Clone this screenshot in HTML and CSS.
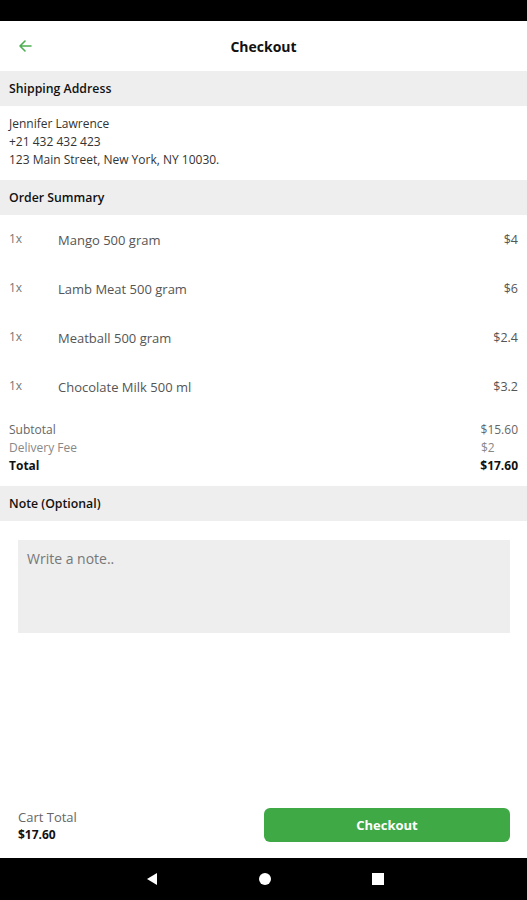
FILE: index.html
```html
<!DOCTYPE html>
<html>
<head>
<meta charset="utf-8">
<link rel="stylesheet" href="styles.css">
</head>
<body>
<div class="screen">
  <div class="status-bar"></div>
  <header class="app-bar">
    <svg class="back" width="16" height="16" viewBox="0 0 16 16"><path d="M14 8H3M8 3L3 8l5 5" fill="none" stroke="#4caf50" stroke-width="1.6" stroke-linecap="round" stroke-linejoin="round"/></svg>
    <h1 class="title">Checkout</h1>
  </header>
  <main class="content">
    <div class="section-head">Shipping Address</div>
    <div class="address">
      <div>Jennifer Lawrence</div>
      <div>+21 432 432 423</div>
      <div>123 Main Street, New York, NY 10030.</div>
    </div>
    <div class="section-head">Order Summary</div>
    <div class="items">
      <div class="item"><span class="qty">1x</span><span class="name">Mango 500 gram</span><span class="price">$4</span></div>
      <div class="item"><span class="qty">1x</span><span class="name">Lamb Meat 500 gram</span><span class="price">$6</span></div>
      <div class="item"><span class="qty">1x</span><span class="name">Meatball 500 gram</span><span class="price">$2.4</span></div>
      <div class="item"><span class="qty">1x</span><span class="name">Chocolate Milk 500 ml</span><span class="price">$3.2</span></div>
    </div>
    <div class="totals">
      <div class="trow"><span>Subtotal</span><span>$15.60</span></div>
      <div class="trow light"><span>Delivery Fee</span><span class="fee">$2</span></div>
      <div class="trow bold"><span>Total</span><span>$17.60</span></div>
    </div>
    <div class="section-head">Note (Optional)</div>
    <div class="note-wrap">
      <div class="note">Write a note..</div>
    </div>
  </main>
  <footer class="bottom">
    <div class="cart">
      <div class="cart-label">Cart Total</div>
      <div class="cart-value">$17.60</div>
    </div>
    <button class="checkout">Checkout</button>
  </footer>
  <nav class="nav-bar">
    <svg width="14" height="14" viewBox="0 0 14 14"><path d="M12 1v12L2 7z" fill="#fff"/></svg>
    <svg width="14" height="14" viewBox="0 0 14 14"><circle cx="7" cy="7" r="6" fill="#fff"/></svg>
    <svg width="14" height="14" viewBox="0 0 14 14"><rect x="1" y="1" width="12" height="12" fill="#fff"/></svg>
  </nav>
</div>
</body>
</html>
```
FILE: styles.css
```css
* { box-sizing: border-box; }
html, body { margin: 0; padding: 0; }
body {
  font-family: "Open Sans", "Noto Sans", sans-serif;
  color: #333;
  background: #fff;
}
.screen {
  width: 527px;
  height: 900px;
  display: flex;
  flex-direction: column;
}
.status-bar { height: 21px; background: #000; flex: none; }
.app-bar {
  height: 50px;
  flex: none;
  display: flex;
  align-items: center;
  justify-content: center;
  position: relative;
}
.back { position: absolute; left: 17px; top: 17px; }
.title {
  margin: 0;
  font-size: 14px;
  font-weight: 700;
  color: #111;
}
.content { flex: 1; }
.section-head {
  height: 35px;
  background: #eeeeee;
  display: flex;
  align-items: center;
  padding-left: 9px;
  font-size: 12.3px;
  font-weight: 600;
  color: #111;
}
.address {
  padding: 9px 9px 11px;
  font-size: 12px;
  line-height: 18px;
  color: #333;
}
.item {
  height: 49px;
  display: flex;
  align-items: center;
  padding: 0 9px;
  font-size: 13px;
  color: #555;
}
.qty { width: 49px; color: #777; margin-top: -3px; font-size: 12px; }
.name { flex: 1; }
.price { color: #555; font-size: 12.5px; }
.totals {
  padding: 10px 9px 11px;
  font-size: 12px;
  line-height: 18px;
}
.trow { display: flex; justify-content: space-between; color: #666; }
.trow.light { color: #888; }
.trow .fee { width: 37px; }
.trow.bold { color: #111; font-weight: 700; }
.note-wrap { padding: 19px 17px 0 18px; }
.note {
  height: 93px;
  background: #eeeeee;
  padding: 9px;
  font-size: 14px;
  color: #777;
}
.bottom {
  height: 63px;
  flex: none;
  display: flex;
  align-items: center;
  justify-content: space-between;
  padding: 0 17px 0 18px;
}
.cart { line-height: 18px; margin-top: -2px; }
.cart-label { color: #666; font-size: 13px; }
.cart-value { color: #111; font-weight: 700; font-size: 12px; }
.checkout {
  width: 246px;
  height: 34px;
  margin-top: -4px;
  border: none;
  border-radius: 6px;
  background: #3fa946;
  color: #fff;
  font-family: inherit;
  font-size: 13px;
  font-weight: 700;
}
.nav-bar {
  height: 42px;
  flex: none;
  background: #000;
  display: flex;
  align-items: center;
  justify-content: center;
  gap: 99px;
  padding-left: 2px;
}
```
